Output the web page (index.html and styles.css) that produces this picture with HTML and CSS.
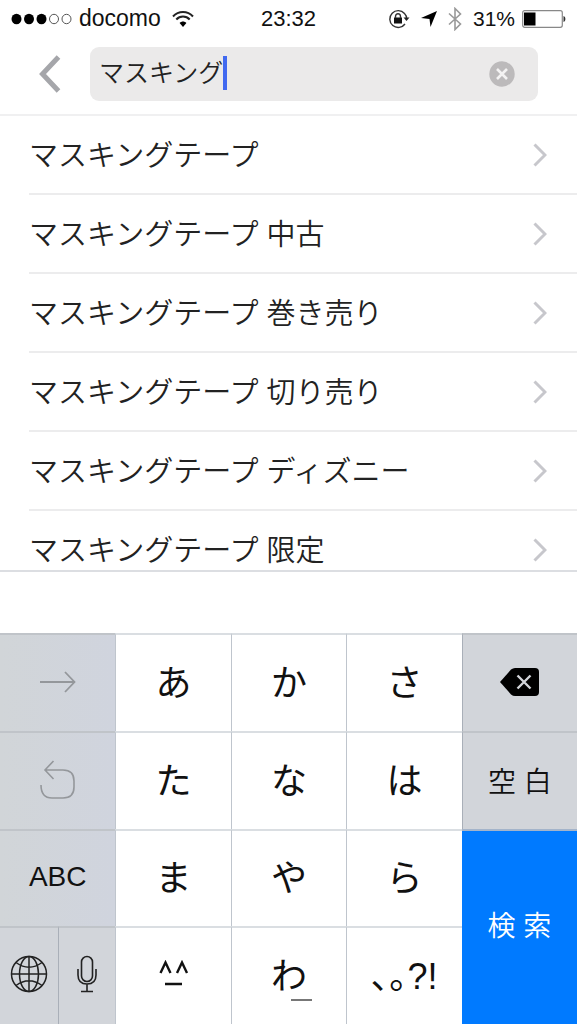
FILE: index.html
```html
<!DOCTYPE html>
<html lang="ja">
<head>
  <meta charset="UTF-8"/>
  <meta name="viewport" content="width=device-width, initial-scale=1"/>
  <title>検索</title>
  <link rel="stylesheet" href="styles.css">
</head>
<body>

  <!-- Status bar -->
  <div class="status">
    <div class="status-left">
      <svg class="signal" width="61" height="12" viewBox="0 0 61 12">
        <ellipse cx="5.500" cy="6" rx="5" ry="5.200"/>
        <ellipse cx="18" cy="6" rx="5" ry="5.200"/>
        <ellipse cx="30.500" cy="6" rx="5" ry="5.200"/>
        <ellipse cx="43" cy="6" rx="4.500" ry="4.700" fill="none" stroke="#555"/>
        <ellipse cx="55.500" cy="6" rx="4.500" ry="4.700" fill="none" stroke="#555"/>
      </svg>
      <span class="carrier">docomo</span>
      <svg class="wifi" width="22" height="18" viewBox="0 0 22 18" fill="none" stroke="#222" stroke-width="2">
        <path d="M1 6.500C6.500 0.500 15.500 0.500 21 6.500"/>
        <path d="M4.300 9.500C8 5.500 14 5.500 17.700 9.500"/>
        <path d="M7.600 13L11 17L14.400 13C12.500 11 9.500 11 7.600 13Z" fill="#000" stroke="none"/>
      </svg>
    </div>
    <span class="clock">23:32</span>
    <div class="status-right">
      <svg width="22" height="20" viewBox="0 0 22 20" fill="none" stroke="#333" stroke-width="1.400">
        <path d="M16.500 4.500A8.400 8.400 0 1 0 17 15M16.500 4.500C18 6 18.600 8 18.600 9.500"/>
        <path d="M15.500 8.500H21.500L18.500 12Z" fill="#222" stroke="none"/>
        <rect x="6" y="8.500" width="8" height="6" fill="#111" stroke="none"/>
        <path d="M7.500 9V7.500A2.500 2.800 0 0 1 12.500 7.500V9"/>
      </svg>
      <svg width="16" height="16" viewBox="0 0 16 16">
        <path d="M16 0L9.500 16L8.500 8L0 7Z"/>
      </svg>
      <svg width="14" height="24" viewBox="0 0 14 24" fill="none" stroke="#999" stroke-width="1.600">
        <path d="M1 6.500L12.500 17L7 22.500V1.500L12.500 7L1 17.500"/>
      </svg>
      <span class="battery">31%
        <svg width="44" height="18" viewBox="0 0 44 18">
          <rect x="0.700" y="0.700" width="39.600" height="16.600" rx="2" fill="#fff" stroke="#888" stroke-width="1.200"/>
          <rect x="2" y="2.500" width="11.500" height="13"/>
          <path d="M41.500 6C44 6.500 44 11.500 41.500 12Z" fill="#333"/>
        </svg>
      </span>
    </div>
  </div>

  <!-- Search header -->
  <form class="search">
    <button class="back" type="button" aria-label="戻る">
      <svg width="22" height="38" viewBox="0 0 22 38" fill="none" stroke="#a5a6aa" stroke-width="5">
        <path d="M19.500 2L3.500 19L19.500 36"/>
      </svg>
    </button>
    <div class="search-box">
      <input type="text" value="マスキング" aria-label="検索キーワード">
      <span class="caret"></span>
      <button class="clear" type="button" aria-label="消去">
        <svg width="26" height="26" viewBox="0 0 26 26">
          <circle cx="13" cy="13" r="12.700" fill="#bcbabb"/>
          <path d="M8 8L18 18M18 8L8 18" stroke="#f4f3f3" stroke-width="2.600"/>
        </svg>
      </button>
    </div>
  </form>

  <!-- Suggestions -->
  <ul class="suggestions">
    <li><a href="#"><span>マスキングテープ</span><svg class="chevron" viewBox="0 0 14 24"><path d="M1.500 1.500L12 12L1.500 22.500"/></svg></a></li>
    <li><a href="#"><span>マスキングテープ 中古</span><svg class="chevron" viewBox="0 0 14 24"><path d="M1.500 1.500L12 12L1.500 22.500"/></svg></a></li>
    <li><a href="#"><span>マスキングテープ 巻き売り</span><svg class="chevron" viewBox="0 0 14 24"><path d="M1.500 1.500L12 12L1.500 22.500"/></svg></a></li>
    <li><a href="#"><span>マスキングテープ 切り売り</span><svg class="chevron" viewBox="0 0 14 24"><path d="M1.500 1.500L12 12L1.500 22.500"/></svg></a></li>
    <li><a href="#"><span>マスキングテープ ディズニー</span><svg class="chevron" viewBox="0 0 14 24"><path d="M1.500 1.500L12 12L1.500 22.500"/></svg></a></li>
    <li><a href="#"><span>マスキングテープ 限定</span><svg class="chevron" viewBox="0 0 14 24"><path d="M1.500 1.500L12 12L1.500 22.500"/></svg></a></li>
  </ul>

  <!-- Keyboard -->
  <div class="candidates"></div>
  <div class="keyboard">
    <button class="side shade" aria-label="次へ">
      <svg width="36" height="22" viewBox="0 0 36 22" fill="none" stroke="#94979b" stroke-width="1.800">
        <path d="M0 11H34M25 1L34.500 11L25 21"/>
      </svg>
    </button>
    <button>あ</button>
    <button>か</button>
    <button>さ</button>
    <button class="side" aria-label="削除">
      <svg width="40" height="30" viewBox="0 0 40 30">
        <path d="M0 15L11 2.500Q13 1 15 1H35Q39 1 39 5V25Q39 29 35 29H15Q13 29 11 27.500Z"/>
        <path d="M17.500 8.500L30.500 21.500M30.500 8.500L17.500 21.500" stroke="#d2d5da" stroke-width="2.400"/>
      </svg>
    </button>

    <button class="side shade" aria-label="元に戻す">
      <svg width="36" height="40" viewBox="0 0 36 40" fill="none" stroke="#94979b" stroke-width="1.600">
        <path d="M5 10H23Q34 10 34 21V27Q34 38 23 38H12Q1 38 1 25M13.500 1L5 10L13.500 19"/>
      </svg>
    </button>
    <button>た</button>
    <button>な</button>
    <button>は</button>
    <button class="side">空 白</button>

    <button class="side shade latin">ABC</button>
    <button>ま</button>
    <button>や</button>
    <button>ら</button>
    <button class="enter">検 索</button>

    <div class="split">
      <button class="side" aria-label="キーボード切替">
        <svg width="38" height="38" viewBox="0 0 38 38" fill="none" stroke="#222" stroke-width="1.500">
          <circle cx="19" cy="19" r="17.500"/>
          <ellipse cx="19" cy="19" rx="9.500" ry="17.500"/>
          <path d="M19 1.500V36.500M1.500 19H36.500M6 7.500Q19 17 32 7.500M6 30.500Q19 21 32 30.500"/>
        </svg>
      </button>
      <button class="side" aria-label="音声入力">
        <svg width="20" height="38" viewBox="0 0 20 38" fill="none" stroke="#222" stroke-width="1.600">
          <rect x="4.500" y="1.500" width="11" height="25" rx="5.500"/>
          <path d="M1 14V20Q1 29 10 29Q19 29 19 20V14M10 29V36M4 36.500H16"/>
        </svg>
      </button>
    </div>
    <button aria-label="顔文字">
      <svg width="30" height="26" viewBox="0 0 30 26" fill="none" stroke="#111" stroke-width="2.400">
        <path d="M1.500 13L6.500 2.500L11.500 13M18 13L23 2.500L28 13M6 24H23"/>
      </svg>
    </button>
    <button class="wa">わ<span class="bar"></span></button>
    <button class="marks">､｡?!</button>
  </div>

</body>
</html>
```
FILE: styles.css
```css
* {
  box-sizing: border-box;
}
html, body {
  margin: 0;
  padding: 0;
  height: 100%;
}
body {
  display: flex;
  flex-direction: column;
  background: #fff;
  color: #111;
  font-family: "Liberation Sans", "Noto Sans CJK JP", sans-serif;
  font-weight: 350;
  overflow: hidden;
}
button {
  display: flex;
  align-items: center;
  justify-content: center;
  padding: 0;
  border: none;
  background: none;
  color: inherit;
  font: inherit;
  cursor: pointer;
}

/* status bar */
.status {
  display: grid;
  grid-template-columns: 1fr auto 1fr;
  align-items: center;
  height: 37px;
  padding: 0 11px;
  font-size: 22px;
}
.status-left,
.status-right,
.battery {
  display: flex;
  align-items: center;
  gap: 7px;
}
.carrier {
  font-size: 23px;
}
.wifi {
  margin-left: 4px;
}
.status-right {
  justify-content: flex-end;
  gap: 11px;
}
.battery {
  font-size: 21px;
}

/* search header */
.search {
  display: flex;
  align-items: center;
  height: 79px;
  padding: 0 39px 3px 38px;
  border-bottom: 2px solid #f0f0f1;
}
.back {
  width: 24px;
  margin-right: 28px;
}
.search-box {
  position: relative;
  display: flex;
  align-items: center;
  flex: 1;
  height: 54px;
  padding: 0 23px 0 9px;
  border-radius: 9px;
  background: #ebeaea;
  font-family: "Noto Sans CJK JP", sans-serif;
  font-size: 25px;
}
.search-box input {
  flex: 1;
  min-width: 0;
  height: 50px;
  padding: 0 0 6px;
  border: none;
  outline: none;
  background: none;
  color: #222;
  font: inherit;
}
.caret {
  position: absolute;
  left: 133px;
  top: 9px;
  width: 4px;
  height: 34px;
  background: #4169f0;
}

/* suggestions */
.suggestions {
  flex: 1;
  min-height: 0;
  margin: 0;
  padding: 0 0 0 29px;
  overflow: hidden;
  list-style: none;
}
.suggestions li {
  height: 79px;
  border-bottom: 2px solid #ececed;
}
.suggestions a {
  display: flex;
  align-items: center;
  justify-content: space-between;
  height: 100%;
  padding-right: 30px;
  color: #222;
  font-size: 29px;
  text-decoration: none;
}
.suggestions span {
  padding-bottom: 4px;
}
.chevron {
  width: 14px;
  height: 24px;
  fill: none;
  stroke: #c7c7cc;
  stroke-width: 3;
}

/* keyboard */
.candidates {
  height: 63px;
  border-top: 2px solid #dcdee2;
}
.keyboard {
  display: grid;
  grid-template-columns: repeat(5, 1fr);
  grid-template-rows: repeat(4, 1fr);
  height: 391px;
  font-size: 36px;
}
.keyboard button {
  padding-bottom: 6px;
  border-top: 2px solid #dadee2;
  border-left: 1px solid #bfc5cd;
  font-weight: 400;
}
.keyboard .side {
  padding-bottom: 2px;
  border-top-color: #c0c4c9;
  border-left-color: #a9afb8;
  background: #d2d5da;
  font-size: 28px;
  font-weight: 350;
}
.keyboard .shade {
  border-left: none;
  background: linear-gradient(90deg, #d1d5d8, #d0d4de);
}
.keyboard .enter {
  grid-column: 5;
  grid-row: 3 / 5;
  border-top-color: #a4b4ca;
  border-left: none;
  background: #007aff;
  color: #fff;
  font-size: 28px;
  font-weight: 350;
}
.split {
  display: grid;
  grid-template-columns: 1fr 1fr;
}
.keyboard .split .side {
  padding-bottom: 4px;
}
.keyboard .split .side:first-child {
  border-left: none;
}
.wa {
  position: relative;
}
.bar {
  position: absolute;
  right: 34px;
  bottom: 23px;
  width: 21px;
  height: 2px;
  background: #777;
}
```
